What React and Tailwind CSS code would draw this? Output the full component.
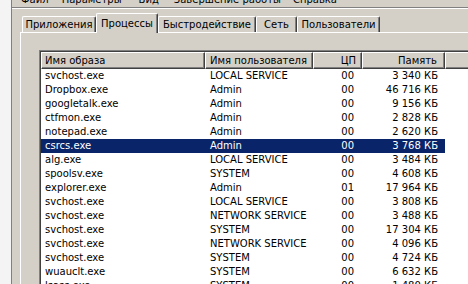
import React from 'react';

const rows = [
    ['svchost.exe', 'LOCAL SERVICE', '00', '3 340 КБ'],
    ['Dropbox.exe', 'Admin', '00', '46 716 КБ'],
    ['googletalk.exe', 'Admin', '00', '9 156 КБ'],
    ['ctfmon.exe', 'Admin', '00', '2 828 КБ'],
    ['notepad.exe', 'Admin', '00', '2 620 КБ'],
    ['csrcs.exe', 'Admin', '00', '3 768 КБ'],
    ['alg.exe', 'LOCAL SERVICE', '00', '3 484 КБ'],
    ['spoolsv.exe', 'SYSTEM', '00', '4 608 КБ'],
    ['explorer.exe', 'Admin', '01', '17 964 КБ'],
    ['svchost.exe', 'LOCAL SERVICE', '00', '3 808 КБ'],
    ['svchost.exe', 'NETWORK SERVICE', '00', '3 488 КБ'],
    ['svchost.exe', 'SYSTEM', '00', '17 304 КБ'],
    ['svchost.exe', 'NETWORK SERVICE', '00', '4 096 КБ'],
    ['svchost.exe', 'SYSTEM', '00', '4 724 КБ'],
    ['wuauclt.exe', 'SYSTEM', '00', '6 632 КБ'],
    ['lsass.exe', 'SYSTEM', '00', '1 480 КБ'],
];

const selected = 5;

const Tab = ({ label, width, active }) => (
    <div
        className={
            active
                ? 'relative z-10 -mb-px h-[20px] shrink-0 flex items-center justify-center bg-[#d4d0c8] border-t border-l border-white border-r border-r-[#404040] shadow-[inset_-1px_0_0_#808080] rounded-t-[2px]'
                : 'h-[16px] shrink-0 flex items-center justify-center border-t border-l border-white border-r border-r-[#404040] shadow-[inset_-1px_0_0_#808080] rounded-t-[2px]'
        }
        style={{ width }}
    >
        {label}
    </div>
);

const HeaderCell = ({ children, className }) => (
    <div className={`h-[17px] shrink-0 flex items-center bg-[#d4d0c8] border-t border-l border-white border-r border-b border-r-[#404040] border-b-[#404040] shadow-[inset_-1px_-1px_0_#808080] ${className}`}>
        {children}
    </div>
);

export default function App() {
    return (
        <div className="w-[468px] h-[284px] overflow-hidden flex text-[10px] text-black font-['DejaVu_Sans',sans-serif] leading-none">
            <div className="w-[12px] shrink-0 bg-[#f4f4f4] border-r border-[#808080]" />
            <div className="flex-1 flex flex-col bg-[#d4d0c8] min-w-0">
                {/* menu bar, mostly cut off at the top */}
                <div className="h-[7px] shrink-0 overflow-hidden">
                    <div className="flex mt-[-7px] h-[13px] items-center pl-[9px] whitespace-nowrap">
                        <span>Файл</span>
                        <span className="ml-[13px]">Параметры</span>
                        <span className="ml-[17px]">Вид</span>
                        <span className="ml-[15px]">Завершение работы</span>
                        <span className="ml-[12px]">Справка</span>
                    </div>
                </div>
                <div className="h-px shrink-0 bg-[#808080]" />
                <div className="h-px shrink-0 bg-white" />

                {/* tabs */}
                <div className="h-[23px] shrink-0 flex items-end pl-[10px] whitespace-nowrap">
                    <Tab label="Приложения" width={74} />
                    <Tab label="Процессы" width={62} active />
                    <Tab label="Быстродействие" width={98} />
                    <Tab label="Сеть" width={41} />
                    <Tab label="Пользователи" width={83} />
                </div>

                {/* tab panel */}
                <div className="flex-1 shrink-0 ml-[8px] border-t border-l border-white pl-[18px] pt-[17px]">
                    <div className="w-[460px] border-t border-l border-[#808080]">
                        <div className="border-t border-l border-[#404040] bg-white">
                            <div className="flex">
                                <HeaderCell className="w-[164px] pl-[3px]">Имя образа</HeaderCell>
                                <HeaderCell className="w-[108px] pl-[4px]">Имя пользователя</HeaderCell>
                                <HeaderCell className="w-[49px] justify-end pr-[5px]">ЦП</HeaderCell>
                                <HeaderCell className="w-[83px] justify-end pr-[7px]">Память</HeaderCell>
                                <HeaderCell className="flex-1" />
                            </div>
                            {rows.map((r, i) => (
                                <div
                                    key={i}
                                    className={`flex h-[14px] items-center w-[404px] ${i === selected ? 'bg-[#0a246a] text-white' : ''}`}
                                >
                                    <div className="w-[164px] pl-[4px] whitespace-nowrap">{r[0]}</div>
                                    <div className="w-[108px] pl-[5px] whitespace-nowrap">{r[1]}</div>
                                    <div className="w-[49px] text-right pr-[8px]">{r[2]}</div>
                                    <div className="w-[83px] text-right pr-[7px] whitespace-nowrap">{r[3].replace(/ /g, '\u00a0')}</div>
                                </div>
                            ))}
                        </div>
                    </div>
                </div>
            </div>
        </div>
    );
}
